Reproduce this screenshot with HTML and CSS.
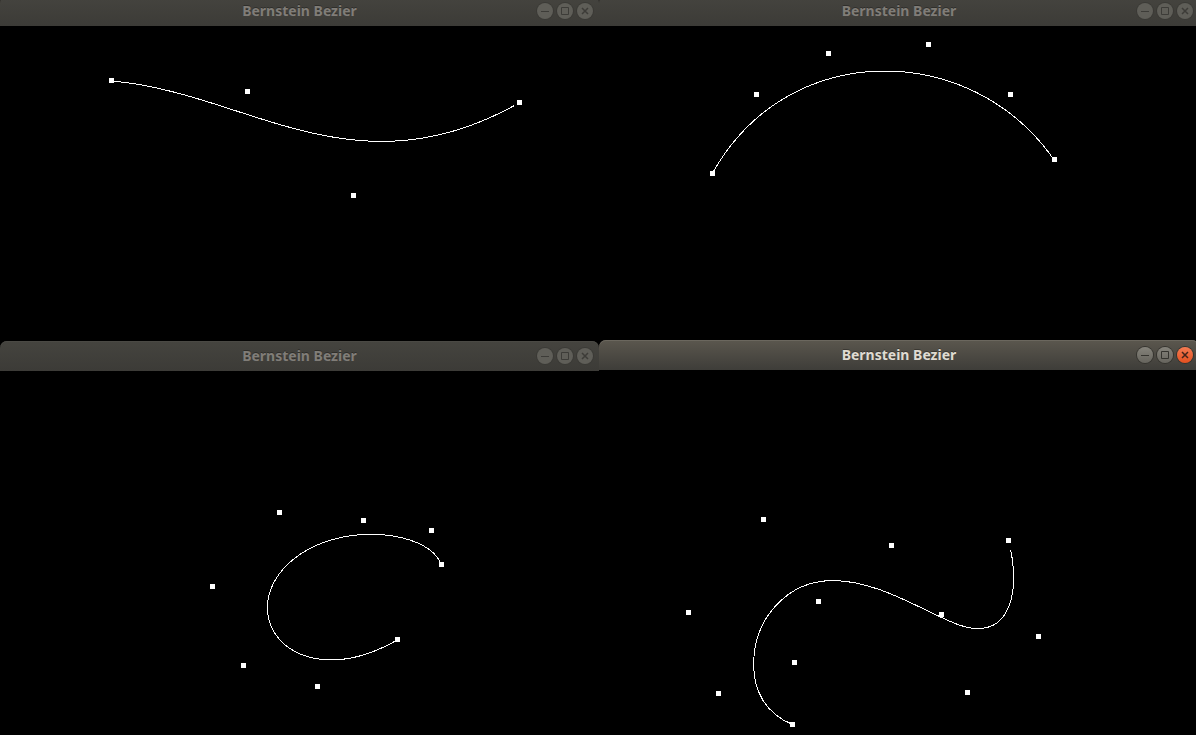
FILE: index.html
```
<!DOCTYPE html>
<html lang="en">
<head>
<meta charset="utf-8">
<title>Bernstein Bezier</title>
<link rel="stylesheet" href="styles.css">
</head>
<body>
<svg class="symbols" aria-hidden="true">
  <symbol id="min" viewBox="0 0 16 16"><path d="M4 8.500h8"/></symbol>
  <symbol id="max" viewBox="0 0 16 16"><path d="M4.500 4.500h7v7h-7z"/></symbol>
  <symbol id="close" viewBox="0 0 16 16"><path d="M5 5l6 6M11 5l-6 6"/></symbol>
</svg>
<main class="desktop">
  <div class="column">
    <section class="window upper-left">
      <header class="titlebar">
        <h2 class="title">Bernstein Bezier</h2>
        <div class="controls">
          <button class="control" aria-label="Minimize"><svg><use href="#min"/></svg></button>
          <button class="control" aria-label="Maximize"><svg><use href="#max"/></svg></button>
          <button class="control close" aria-label="Close"><svg><use href="#close"/></svg></button>
        </div>
      </header>
      <svg class="canvas" data-origin="0 26" data-end="0.99" data-points="111,80 247,91 353,195 519,102"></svg>
    </section>
    <section class="window lower-left">
      <header class="titlebar">
        <h2 class="title">Bernstein Bezier</h2>
        <div class="controls">
          <button class="control" aria-label="Minimize"><svg><use href="#min"/></svg></button>
          <button class="control" aria-label="Maximize"><svg><use href="#max"/></svg></button>
          <button class="control close" aria-label="Close"><svg><use href="#close"/></svg></button>
        </div>
      </header>
      <svg class="canvas" data-origin="0 371" data-end="1" data-points="441,564 431,530 363,520 279,512 212,586 243,665 317,686 397,639"></svg>
    </section>
  </div>
  <div class="column right">
    <section class="window upper-right">
      <header class="titlebar">
        <h2 class="title">Bernstein Bezier</h2>
        <div class="controls">
          <button class="control" aria-label="Minimize"><svg><use href="#min"/></svg></button>
          <button class="control" aria-label="Maximize"><svg><use href="#max"/></svg></button>
          <button class="control close" aria-label="Close"><svg><use href="#close"/></svg></button>
        </div>
      </header>
      <svg class="canvas" data-origin="599 26" data-end="1" data-points="712,173 756,94 828,53 928,44 1010,94 1054,159"></svg>
    </section>
    <section class="window lower-right active">
      <header class="titlebar">
        <h2 class="title">Bernstein Bezier</h2>
        <div class="controls">
          <button class="control" aria-label="Minimize"><svg><use href="#min"/></svg></button>
          <button class="control" aria-label="Maximize"><svg><use href="#max"/></svg></button>
          <button class="control close" aria-label="Close"><svg><use href="#close"/></svg></button>
        </div>
      </header>
      <svg class="canvas" data-origin="599 370" data-path="M792.500 724.500C765.500 713.500 753.600 691 753.600 664C753.600 619 787 580.600 833 580.600C867 580.600 900 597.500 929 611.500C948 620.500 963 628.600 978 628.600C1003 628.600 1013.600 606 1013.600 578C1013.600 567 1012.500 558 1010.500 550" data-points="792,724 718,693 688,612 763,519 818,601 794,662 891,545 941,614 967,692 1038,636 1008,540"></svg>
    </section>
  </div>
</main>
<script src="curves.js"></script>
</body>
</html>
```
FILE: styles.css
```
* { box-sizing: border-box; }

body {
  margin: 0;
  background: #000;
  overflow: hidden;
}

.symbols { display: none; }

.desktop {
  display: grid;
  grid-template-columns: 1fr 1fr;
  width: calc(100% + 2px);
  height: 100vh;
  overflow: hidden;
}

.column {
  display: flex;
  flex-direction: column;
  min-width: 0;
  height: calc(100vh + 4px);
  margin-top: -4px;
}

.right { margin-right: -1px; }

.window {
  display: flex;
  flex-direction: column;
  min-height: 0;
  background: #000;
}

.upper-left { flex: 345 1 0; }
.lower-left { flex: 394 1 0; }
.upper-right { flex: 344 1 0; }
.lower-right { flex: 395 1 0; }

.titlebar {
  display: grid;
  grid-template-columns: 1fr auto 1fr;
  align-items: center;
  flex: none;
  height: 30px;
  padding: 0 6px;
  border-radius: 7px 7px 0 0;
  background: linear-gradient(#45443f, #3c3b37);
  box-shadow: inset 0 1px #4a4944;
  color: #807d78;
}

.active .titlebar {
  background: linear-gradient(#5b574e, #3e3d39);
  box-shadow: inset 0 1px #6b675e;
  color: #dfdbd2;
}

.title {
  grid-column: 2;
  margin: 0;
  font: 700 14px/20px "Noto Sans", "Open Sans", sans-serif;
  text-shadow: 0 -1px rgba(0, 0, 0, 0.3);
}

.controls {
  display: flex;
  justify-content: flex-end;
  gap: 4px;
}

.control {
  width: 16px;
  height: 16px;
  padding: 0;
  border: 0;
  border-radius: 50%;
  background: #5f5e58;
  box-shadow: 0 0 0 1px #3b3a36;
  color: #3d3c38;
}

.control svg {
  display: block;
  width: 16px;
  height: 16px;
  fill: none;
  stroke: currentColor;
}

.active .control {
  background: linear-gradient(#85837b, #66645d);
  box-shadow: 0 0 0 1px #35342f;
  color: #35342f;
}

.active .close {
  background: linear-gradient(#f47b52, #e4501f);
  color: #43241a;
}

.close svg { stroke-width: 1.5; }

.canvas {
  flex: 1;
  width: 100%;
  min-height: 0;
  shape-rendering: crispEdges;
}

.curve {
  fill: none;
  stroke: #fff;
  stroke-width: 1;
}

.point { fill: #fff; }
```
FILE: curves.js
```
const NS = "http://www.w3.org/2000/svg";

// Evaluates the Bernstein form by repeated interpolation.
function evaluate(points, t) {
  let level = points;
  while (level.length > 1) {
    level = level.slice(1).map((p, i) => [
      level[i][0] * (1 - t) + p[0] * t,
      level[i][1] * (1 - t) + p[1] * t
    ]);
  }
  return level[0];
}

function add(parent, name, attributes) {
  const node = document.createElementNS(NS, name);
  for (const key in attributes) node.setAttribute(key, attributes[key]);
  parent.appendChild(node);
  return node;
}

document.querySelectorAll(".canvas").forEach((canvas) => {
  const [x, y] = canvas.dataset.origin.split(" ").map(Number);
  const points = canvas.dataset.points.split(" ").map((p) => p.split(",").map(Number));
  const group = add(canvas, "g", { transform: `translate(${-x} ${-y})` });
  let d = canvas.dataset.path;
  if (!d) {
    const samples = [];
    for (let i = 0; i <= 100; i++) {
      const [cx, cy] = evaluate(points, canvas.dataset.end * i / 100);
      samples.push(`${cx} ${cy + 1}`);
    }
    d = "M" + samples.join("L");
  }
  add(group, "path", { class: "curve", d });
  points.forEach(([px, py]) => {
    add(group, "rect", { class: "point", x: px - 2, y: py - 2, width: 5, height: 5 });
  });
});
```
